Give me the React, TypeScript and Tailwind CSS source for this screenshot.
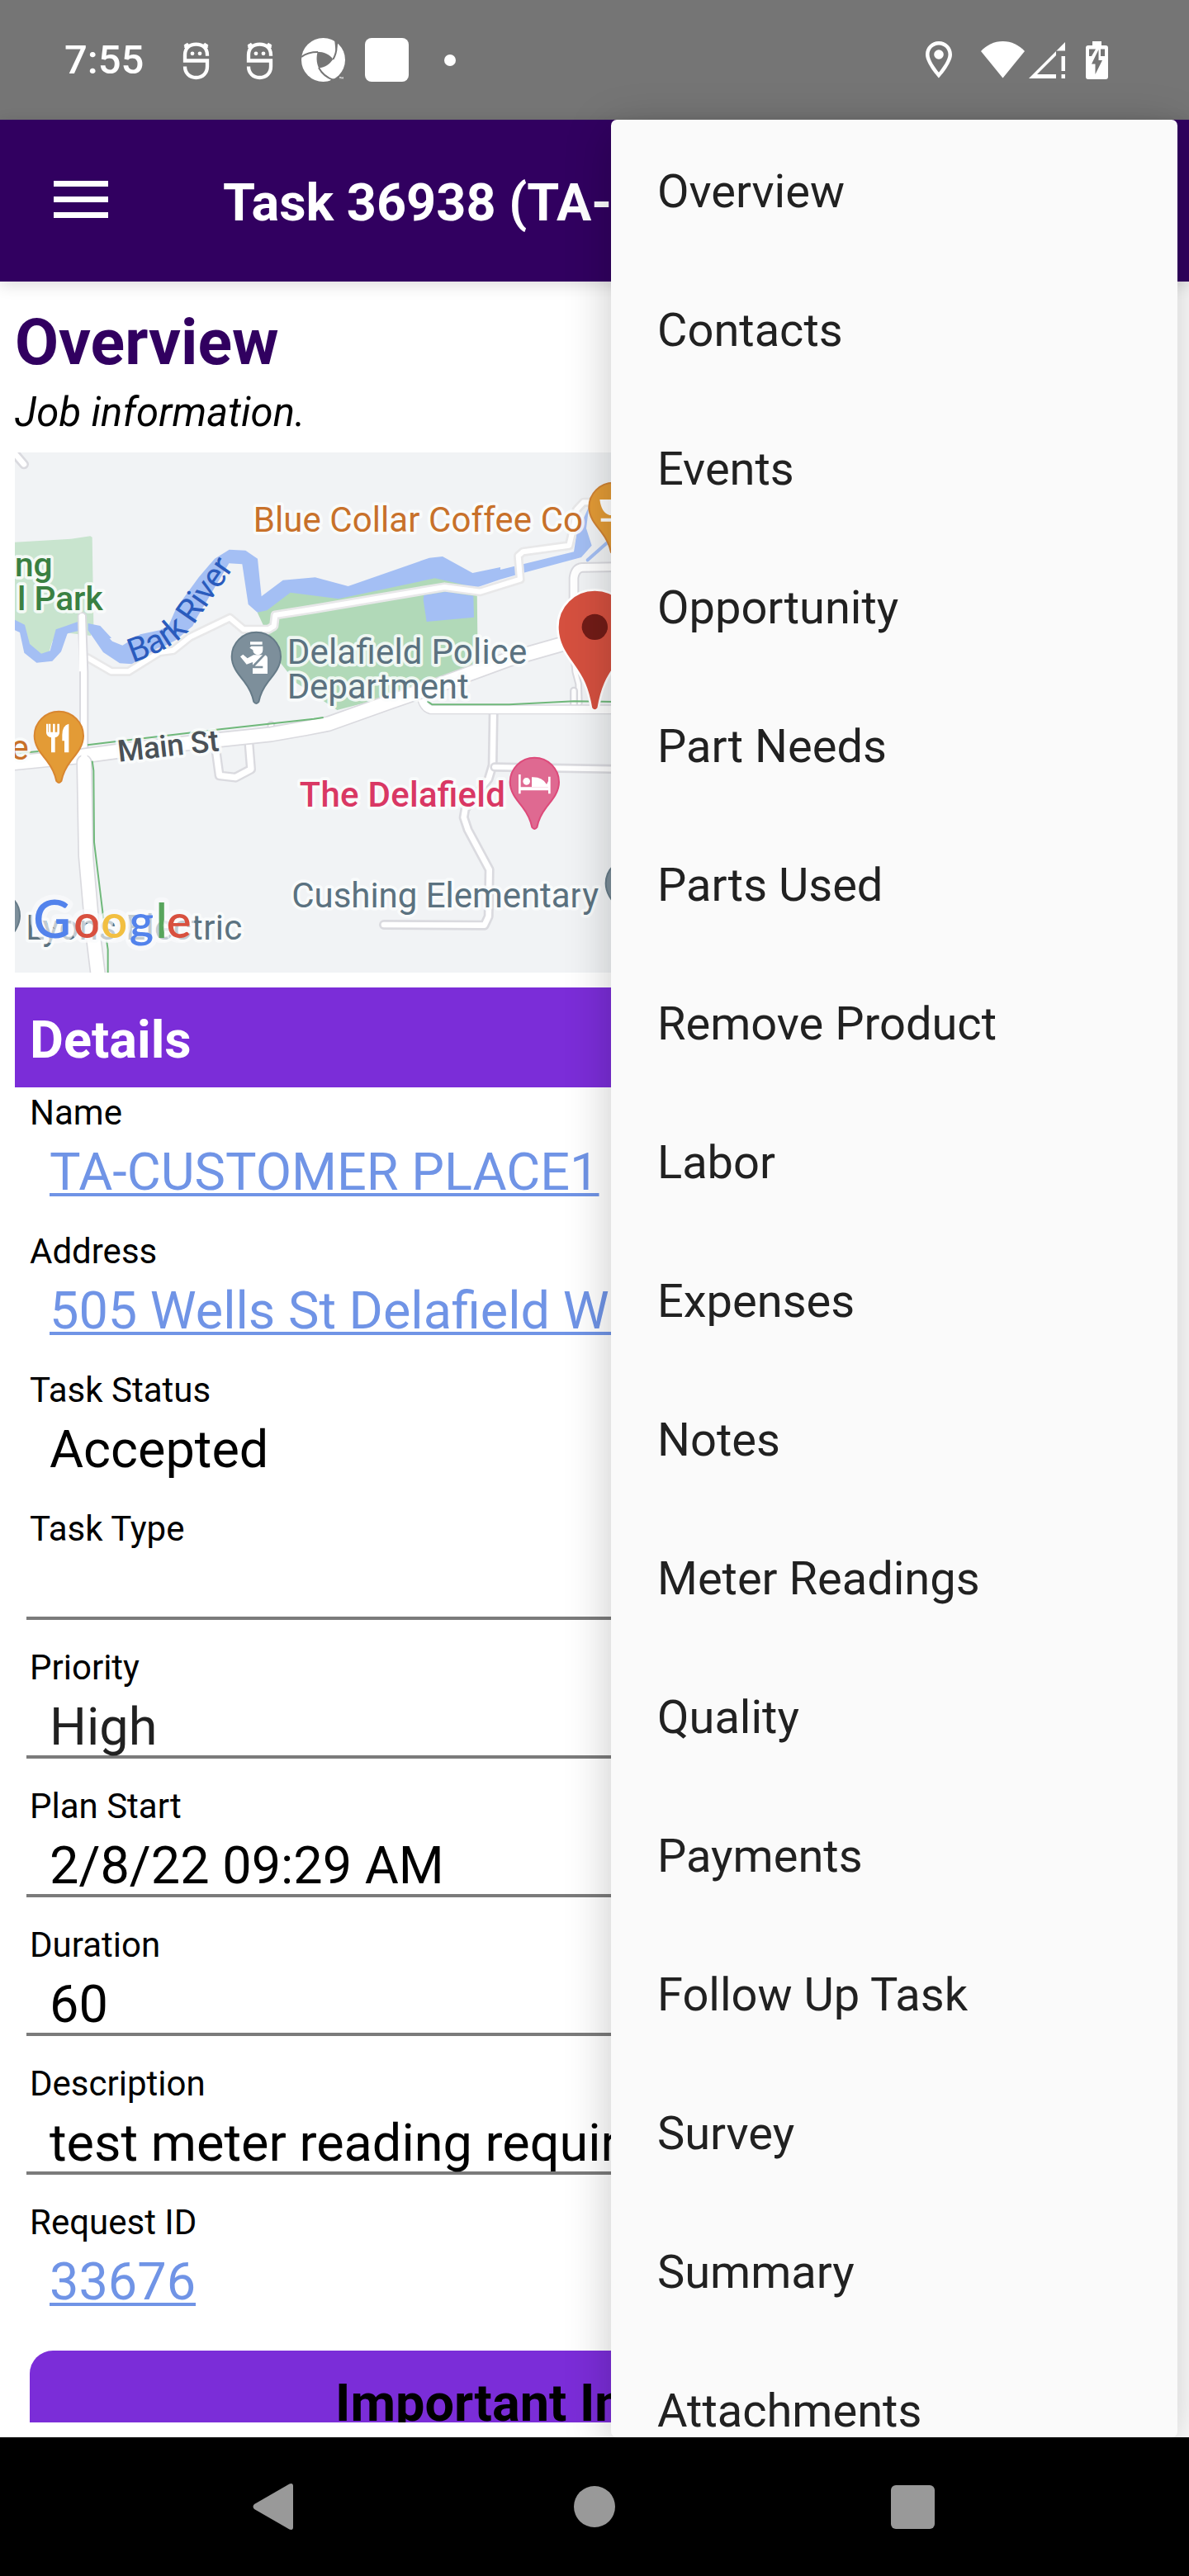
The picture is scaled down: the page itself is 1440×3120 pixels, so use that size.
import React from "react";

const MENU = [
  "Overview", "Contacts", "Events", "Opportunity", "Part Needs", "Parts Used",
  "Remove Product", "Labor", "Expenses", "Notes", "Meter Readings", "Quality",
  "Payments", "Follow Up Task", "Survey", "Summary", "Attachments",
];

type Field = { label: string; value: string; kind: "link" | "plain" | "input" | "select" };

const FIELDS: Field[] = [
  { label: "Name", value: "TA-CUSTOMER PLACE1", kind: "link" },
  { label: "Address", value: "505 Wells St Delafield W\u00a0", kind: "link" },
  { label: "Task Status", value: "Accepted", kind: "plain" },
  { label: "Task Type", value: "", kind: "input" },
  { label: "Priority", value: "High", kind: "select" },
  { label: "Plan Start", value: "2/8/22 09:29 AM", kind: "input" },
  { label: "Duration", value: "60", kind: "input" },
  { label: "Description", value: "test meter reading requir", kind: "input" },
  { label: "Request ID", value: "33676", kind: "link" },
];

function HeadIcon() {
  return (
    <svg width="34" height="48" viewBox="0 0 34 48" fill="none" stroke="#fff" strokeWidth="4.300">
      <path d="M31 18.800V17.500C31 9.500 25.500 4.600 17.500 4.600S4 9.500 4 17.500V24.500H31V31.500C31 39.500 25.500 45 17.500 45S4 39.500 4 31.500" />
      <path d="M3.500 5l5 4.500M7.500 3.500L4 9M31.500 5l-5 4.500M27.500 3.500L31 9" strokeWidth="3" />
      <circle cx="13" cy="15.800" r="2.400" fill="#fff" stroke="none" />
      <circle cx="22" cy="15.800" r="2.400" fill="#fff" stroke="none" />
    </svg>
  );
}

function SwirlIcon() {
  return (
    <svg width="54" height="54" viewBox="0 0 54 54">
      <circle cx="26.500" cy="26.500" r="26.500" fill="#fff" />
      <path d="M19.700 16.700C27 16.700 34 19.500 38.300 25.700 34.500 31.500 29 35.500 21 36.300 18 29.500 18 23 19.700 16.700z" fill="#757575" />
      <path d="M38.300 26C43 18 43.500 10 41.500 2M20 17C12.500 17 5.500 18.500 0 23M21 36C25 43.500 30.500 48 39 51" stroke="#757575" strokeWidth="2" fill="none" />
      <path d="M40 1l4.500 4-1.500 7-1.500 3zM34 53l2.500-3 6-1.500L45 54z" fill="#757575" />
      <path d="M46 47.500h2M47 47.500v2M48.800 49.500v-2l.8 1 .8-1v2" stroke="#fff" strokeWidth=".7" fill="none" />
    </svg>
  );
}

function StatusBar() {
  return (
    <div className="flex h-[145px] shrink-0 items-center bg-[#757575] pl-[78px] pr-[97px]">
      <div className="flex items-center">
        <span className="w-[142px] text-[49px] font-medium leading-[60px] text-white">7:55</span>
        <HeadIcon />
        <div className="ml-[43px]"><HeadIcon /></div>
        <div className="ml-[34px]"><SwirlIcon /></div>
        <div className="ml-[23px] size-[53px] rounded-[8px] bg-white" />
        <div className="ml-[43px] size-[14px] rounded-full bg-white" />
      </div>
      <svg className="ml-auto" width="226" height="50" viewBox="1117 48 226 50" fill="#fff">
        <path fillRule="evenodd" d="M1137 50c-9 0-16 7-16 16 0 11 16 28.500 16 28.500S1153 77 1153 66c0-9-7-16-16-16zm0 4.600c6.500 0 11.500 5 11.500 11.400 0 6.500-7 16-11.500 21.800-4.500-5.800-11.500-15.300-11.500-21.800 0-6.400 5-11.400 11.500-11.400z" />
        <circle cx="1137" cy="66" r="5.800" />
        <path d="M1188 62c7-7.500 16-12 26.500-12S1234 54.500 1241 62l-26.500 32.500z" />
        <path d="M1246 95l44-44v10.500h-11V67l-23 23h23v5zM1285.500 68h4.500v18h-4.500zM1285.500 90h4.500v5h-4.500z" />
        <path fillRule="evenodd" d="M1323 50h11v5h5a3 3 0 0 1 3 3v35a3 3 0 0 1-3 3h-21a3 3 0 0 1-3-3V58a3 3 0 0 1 3-3h5z" />
        <path d="M1319 59.500h8l-5 8.500h-3zM1333 59.500h5V68h-5zM1330.500 60l-8.500 17.500h4.500V90l8.500-17h-4.500z" fill="#757575" />
      </svg>
    </div>
  );
}

const PIN =
  "M-89 0a89 89 0 0 1 178 0c0 34-20 60-45 90-20 26-30 48-35 74q-9 12-18 0c-5-26-15-48-35-74-25-30-45-56-45-90z";

function Pin({ x, y, fill, stroke, children }: { x: number; y: number; fill: string; stroke: string; children?: React.ReactNode }) {
  return (
    <g transform={`translate(${x} ${y})`}>
      <path d={PIN} fill={fill} stroke={stroke} strokeWidth="6" />
      {children}
    </g>
  );
}

function Road({ d, w, c, edge = "#dadadf" }: { d: string; w: number; c: number; edge?: string }) {
  return (
    <g fill="none" strokeLinejoin="round" strokeLinecap="round">
      <path d={d} stroke={edge} strokeWidth={c} />
      <path d={d} stroke="#fff" strokeWidth={w} />
    </g>
  );
}

function MapView() {
  const halo = { stroke: "#fbfdfd", strokeWidth: 22, strokeOpacity: 0.85, strokeLinejoin: "round" as const, paintOrder: "stroke" };
  return (
    <svg className="block h-[630px] w-[1404px]" viewBox="54 54 4212 1890" fontFamily="Roboto, sans-serif">
      <rect x="54" y="54" width="4212" height="1890" fill="#f1f3f5" />
      <path d="M54 380L258 368 328 358 335 362 340 678 330 720 250 710 190 740 175 790 130 790 54 665z" fill="#c8e4ce" />
      <path d="M935 635L958 685 975 715 1020 820 1075 890 1225 990 1610 890 1736 820 1733 545 1580 505 1230 575 1055 555z" fill="#b1d9b8" />
      <g fill="#a4bff4">
        <path d="M54 662L90 680 108 750 150 785 182 775 203 697 230 688 285 668 285 702 245 712 222 778 190 812 133 818 88 782 72 708 54 700z" />
        <path d="M320 675L364 684 405 728 398 730 408 740 445 755 510 715 580 700 612 685 640 620 722 508 780 440 833 407 892 410 936 440 950 577 1028 518 1145 508 1265 540 1560 437 1608 432 1717 492 1818 471 1818 480 2085 415 2095 350 2140 250 2130 330 2150 392 2112 435 1900 492 1818 515 1730 545 1580 511 1230 586 1055 563 970 628 935 635 902 606 880 460 832 457 715 655 700 685 640 735 480 823 435 820 375 780 320 700z" />
        <path d="M1540 572L1620 560 1720 575 1722 653 1550 669 1538 590z" />
        <path d="M2135 445L2240 352" stroke="#a4bff4" strokeWidth="12" strokeLinecap="round" />
      </g>
      <Road d="M45 48L87 97" w={20} c={36} />
      <Road d="M318 800L405 850 467 850 580 780 630 773 690 725 835 655 885 697 975 697 995 685 1000 645 1140 623 1615 543 1745 560 1890 515 1883 430 1900 415 2068 392 2085 320 2095 262 2120 235 2145 235" w={18} c={34} edge="#e8e8e9" />
      <Road d="M2085 600V510Q2090 474 2115 472L2240 470" w={26} c={38} />
      <Road d="M2083 780L2090 850 2102 895 2104 965" w={14} c={26} />
      <Road d="M785 1140L797 1228 855 1235 912 1205 902 1080" w={22} c={36} />
      <Road d="M1793 1000L1790 1190 1775 1240 1690 1350 1685 1380 1700 1425 1778 1570 1775 1740 1760 1772 1395 1770" w={20} c={36} />
      <Road d="M1797 1197L2260 1205" w={18} c={34} />
      <Road d="M985 1045V1070M2085 920V970" w={16} c={30} />
      <Road d="M1530 930Q1535 980 1565 988H2260" w={28} c={36} />
      <Road d="M298 650L305 850V1150" w={22} c={34} />
      <Road d="M20 1185L300 1157 500 1130 985 1078 1110 1056 1193 1040 1418 960 1610 893 1850 805 2050 748 2260 690" w={48} c={58} />
      <Road d="M306 1180L312 1520 334 1770 362 2000" w={48} c={58} />
      <path d="M298 645V850M306 1140V1200" stroke="#fff" strokeWidth="22" />
      <path
        d="M54 1148L140 1140M318 1117L430 1103 800 1060 1140 1022 1175 1017M335 1175L340 1210 342 1470 375 1740 392 1860V1944M1553 958L1570 970H1850L2085 958 2240 960"
        fill="none"
        stroke="#6fb87a"
        strokeWidth="6"
      />

      <g fontSize="126" fill="#c8712a" {...halo}>
        <text x="920" y="342" textLength="1198">Blue Collar Coffee Co</text>
        <text x="104" y="1170" textAnchor="end">e</text>
      </g>
      <g fontSize="122" fontWeight="500" fill="#3a8042" {...halo}>
        <text x="191" y="503" textAnchor="end">ng</text>
        <text x="374" y="628" textAnchor="end">l Park</text>
      </g>
      <path id="river-label" d="M482 818C600 780 680 725 722 655L868 445" fill="none" />
      <text fontSize="122" fill="#2a5bbd"><textPath href="#river-label" textLength="522">Bark River</textPath></text>

      <Pin x={931} y={796} fill="#7d8f9b" stroke="#667b88">
        <g fill="#fff">
          <path d="M-22-54h44v10h-44zM-18-38h42v14a18 18 0 0 1-36 0l-12-8z" />
          <path d="M-58 0l10-8 16 14 22-12h40q11 2 11 14v54h-54V20l-22 8z" />
          <path d="M30-8L-14 38H24" stroke="#7d8f9b" strokeWidth="8" fill="none" />
        </g>
      </Pin>
      <Pin x={214} y={1084} fill="#e39b36" stroke="#d88630">
        <path d="M-46-44v32q0 14 18 18v54h14V6q16-4 16-18v-32h-8v30h-8v-30h-8v30h-8v-30h-8v30h-2v-30zM36-44q-24 6-24 40v22h8v42h16z" fill="#fff" />
      </Pin>
      <Pin x={1942} y={1252} fill="#df6991" stroke="#dd4a7a">
        <path d="M-58-28h8v46H50V-20h8v62h-8V30H-50v12h-8z" fill="#fff" />
        <circle cx="-29" cy="-3" r="15" fill="#fff" stroke="#df6991" strokeWidth="4" />
        <path d="M-10-18q38-2 54 26l8-16v26h-62z" fill="#fff" />
      </Pin>
      <Pin x={2229} y={253} fill="#e39b36" stroke="#d08334">
        <path d="M-50-28H50q0 50-36 57h-28q-30-8-36-57zM-46 40h90v12h-90z" fill="#fff" />
      </Pin>
      <Pin x={2290} y={1620} fill="#7d8f9b" stroke="#667b88" />
      <Pin x={-17} y={1738} fill="#7d8f9b" stroke="#667b88" />

      <g fontSize="126" fill="#5b7280" {...halo}>
        <text x="1043" y="822" textLength="872">Delafield Police</text>
        <text x="1043" y="948" textLength="660">Department</text>
        <text x="1060" y="1708" textLength="1115">Cushing Elementary</text>
        <text x="94" y="1825" textLength="786">Lyons Electric</text>
      </g>
      <text x="1088" y="1340" textLength="748" fontSize="126" fontWeight="500" fill="#d93864" {...halo}>The Delafield</text>
      <text transform="translate(431 1178) rotate(-6.300)" textLength="370" fontSize="110" fontWeight="500" fill="#4a5157" {...halo}>Main St</text>

      <path d="M2161 553c-75 0-135 60-135 135 0 90 65 130 97 205 15 35 20 60 25 90q13 18 26 0c5-30 10-55 25-90 32-75 97-115 97-205 0-75-60-135-135-135z" fill="#d5503f" stroke="#fff" strokeWidth="8" />
      <circle cx="2161" cy="688" r="47" fill="#721c17" />

      <g fontFamily="Lato, sans-serif" fontWeight="600" fontSize="168" stroke="#fafbfc" strokeOpacity="0.65" strokeWidth="36" strokeLinejoin="round" paintOrder="stroke">
        <text y="1817">
          <tspan x="121" fontSize="188" fill="#5383ec">G</tspan>
          <tspan x="268" fill="#d8503f">o</tspan>
          <tspan x="367" fill="#f2bf41">o</tspan>
          <tspan x="470" fill="#5383ec">g</tspan>
          <tspan x="566" fontSize="172" fill="#58a55c">l</tspan>
          <tspan x="605" fill="#d8503f">e</tspan>
        </text>
      </g>
    </svg>
  );
}

function FieldRow({ label, value, kind }: Field) {
  return (
    <div className="h-[168px]">
      <div className="h-[61px] pl-[18px] text-[42px] leading-[61px] text-black">{label}</div>
      <div className={kind === "input" || kind === "select" ? "mx-[14px] h-[80px] border-b-4 border-[#7b7b7b] pl-[28px]" : "mx-[14px] h-[80px] pl-[28px]"}>
        <span
          className={
            kind === "link"
              ? "whitespace-nowrap text-[63px] leading-[83px] text-[#7094e6] underline decoration-4 underline-offset-[4px] [text-decoration-skip-ink:none]"
              : kind === "select"
                ? "whitespace-nowrap text-[63px] leading-[83px] text-[#212121]"
                : "whitespace-nowrap text-[63px] leading-[83px] text-black"
          }
        >
          {value}
        </span>
      </div>
    </div>
  );
}

export default function App() {
  return (
    <div className="relative flex h-[3120px] w-[1440px] flex-col overflow-hidden bg-white font-['Roboto',sans-serif]">
      <StatusBar />
      <header className="z-10 flex h-[196px] shrink-0 items-center bg-[#310060] pl-[65px] shadow-[0_4px_18px_rgba(0,0,0,0.14)]">
        <div className="mt-[-3px] flex w-[66px] flex-col gap-[12px]">
          <div className="h-[7px] bg-white" />
          <div className="h-[7px] bg-white" />
          <div className="h-[7px] bg-white" />
        </div>
        <h1 className="ml-[139px] mt-[5px] whitespace-nowrap text-[63px] font-bold leading-[74px] text-white">Task 36938 (TA-</h1>
      </header>

      <main className="h-[2611px] shrink-0 px-[18px]">
        <h2 className="h-[118px] pt-[29px] text-[77px] font-bold leading-[90px] text-[#310060]">Overview</h2>
        <p className="h-[89px] pt-[11px] text-[49px] italic leading-[60px] tracking-[0.1px] text-black">Job information.</p>
        <MapView />
        <div className="mt-[18px] h-[121px] bg-[#7b2dd8] pl-[18px] text-[63px] font-bold leading-[127px] text-white">Details</div>
        {FIELDS.map((f) => (
          <FieldRow key={f.label} {...f} />
        ))}
        <div className="mx-[18px] mt-[18px] h-[87px] overflow-hidden rounded-t-[28px] bg-[#7b2dd8] pl-[370px] text-[63px] font-bold leading-[127px] text-black">
          Important In
        </div>
      </main>

      <nav className="z-30 flex h-[168px] shrink-0 items-center bg-black">
        <svg className="ml-[306px]" width="50" height="58" viewBox="0 0 50 58" fill="#999">
          <path d="M44.500 1.500Q49 0 49 4v50q0 4-4.500 2.500L2 32q-3-3 0-6z" />
        </svg>
        <div className="ml-[339px] size-[50px] rounded-full bg-[#999]" />
        <div className="ml-[334px] size-[53px] rounded-[6px] bg-[#999]" />
      </nav>

      <div className="absolute left-[740px] top-[145px] z-20 h-[2807px] w-[686px] rounded-[7px] bg-[#fafafa] shadow-[0_12px_56px_rgba(0,0,0,0.22)]">
        <ul className="flex h-full flex-col overflow-hidden pl-[56px]">
          {MENU.map((m) => (
            <li key={m} className="h-[168px] shrink-0 text-[56px] leading-[174px] text-[#212121]">{m}</li>
          ))}
        </ul>
      </div>
    </div>
  );
}
